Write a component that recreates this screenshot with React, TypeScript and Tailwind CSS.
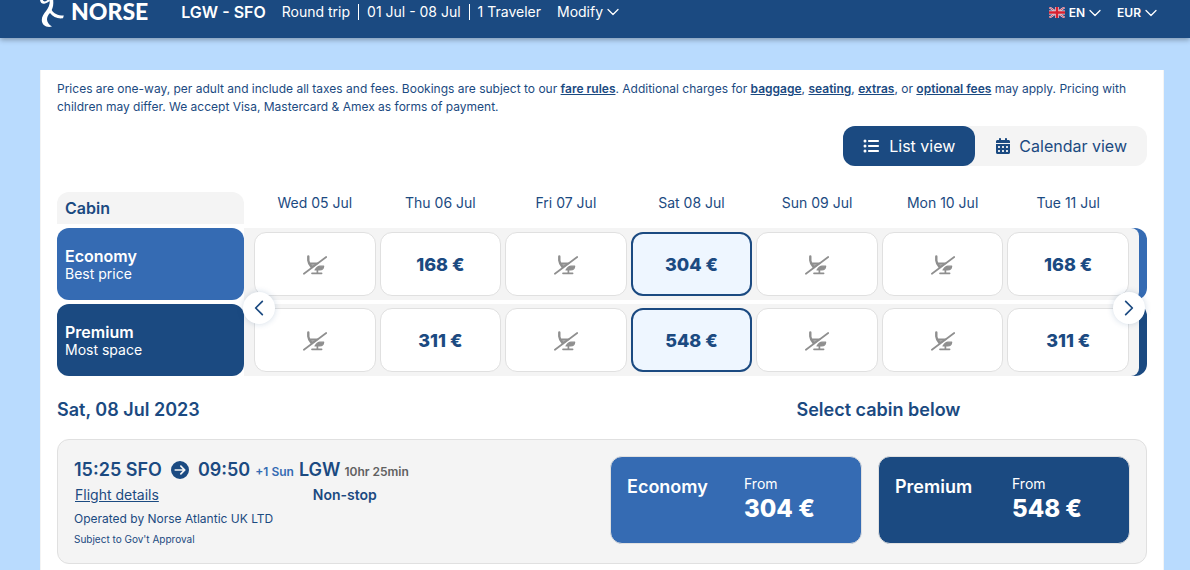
import { FaCalendarDays, FaCircleArrowRight, FaListUl } from "react-icons/fa6";
import { clsx } from "clsx";

type Day = { date: string; economy?: number; premium?: number; selected?: boolean };

const days: Day[] = [
  { date: "Wed 05 Jul" },
  { date: "Thu 06 Jul", economy: 168, premium: 311 },
  { date: "Fri 07 Jul" },
  { date: "Sat 08 Jul", economy: 304, premium: 548, selected: true },
  { date: "Sun 09 Jul" },
  { date: "Mon 10 Jul" },
  { date: "Tue 11 Jul", economy: 168, premium: 311 },
];

const cabins = [
  { key: "economy", name: "Economy", note: "Best price", color: "bg-[#356bb3]", price: 304 },
  { key: "premium", name: "Premium", note: "Most space", color: "bg-[#1b4a81]", price: 548 },
] as const;

const Chevron = ({ className }: { className?: string }) => (
  <svg viewBox="0 0 12 12" className={className} fill="none" stroke="currentColor" strokeWidth="1.3" strokeLinecap="round" strokeLinejoin="round" aria-hidden="true">
    <path d="M1 3.5 6 8.5 11 3.5" />
  </svg>
);

const Logo = () => (
  <a href="#" aria-label="Norse" className="flex items-start gap-[3px] text-white">
    <svg viewBox="0 0 28 28" className="h-7 w-7" fill="currentColor" aria-hidden="true">
      <path d="M9.800 0H13.200C13.600 4.500 13 7.500 11.700 10C13.500 13.500 17.500 15.500 23.800 15.500L23 18.300C17.500 19 12.800 17 10 13C6 17 5.500 22.500 12 26.600C6 28 1.800 24.800 1.800 20C1.800 13 10.500 9.500 9.800 0Z" />
      <path d="M0 0C0.500 3.500 3 4.300 5 3.600C7 3 8 1.800 9.800 1.200V0H7.500C6 1.500 4 2.300 2.800 0Z" />
    </svg>
    <span className="font-['Lato'] text-[23px] leading-[22px] font-black">NORSE</span>
  </a>
);

const Flag = () => (
  <svg viewBox="0 0 16 11" className="h-[11px] w-4" aria-hidden="true">
    <rect width="16" height="11" fill="#2f4379" />
    <path d="M0 0 16 11M16 0 0 11" stroke="#e8e3ea" strokeWidth="2" />
    <path d="M0 0 16 11M16 0 0 11" stroke="#c8203a" strokeWidth="0.8" />
    <path d="M8 0V11M0 5.500H16" stroke="#e8e3ea" strokeWidth="3.800" />
    <path d="M8 0V11M0 5.500H16" stroke="#d8202f" strokeWidth="2.600" />
  </svg>
);

const NoSeat = () => (
  <svg viewBox="0 0 24 20" className="mx-auto h-5 w-6" fill="none" stroke="#8f8f8f" strokeLinecap="round" strokeLinejoin="round" role="img" aria-label="Not available">
    <path d="M5.300 1.500V5.500Q5.500 8.500 8.700 12.300" strokeWidth="2.400" />
    <path d="M6.800 8.200H15L9 12.200Z" fill="#a8a8a8" strokeWidth="1.400" />
    <path d="M12 15 Q14.500 11.200 17 11.200H20.700 Q20.300 15 16.800 15Z" fill="#8f8f8f" strokeWidth="1.200" />
    <path d="M14.400 15V18M9 18.300H18.600" strokeWidth="1.700" />
    <path d="M5 17.300 20 6" stroke="#fff" strokeWidth="1" strokeLinecap="butt" />
    <path d="M0.900 18.800 23.200 2" strokeWidth="1.700" />
  </svg>
);

const Header = () => (
  <header className="relative flex h-[38px] items-start bg-[#1b4a81] pr-[33px] pl-10 text-white shadow-[0_2px_5px_rgba(0,0,0,0.3)]">
    <Logo />
    <div className="ml-[33px] flex h-6 items-center text-sm">
      <h1 className="mr-4 text-base leading-[22px] font-semibold">LGW - SFO</h1>
      <span className="pr-2">Round trip</span>
      <span className="border-l border-white px-2 leading-4">01 Jul - 08 Jul</span>
      <span className="border-l border-white px-2 leading-4">1 Traveler</span>
      <button type="button" className="ml-2 flex items-center gap-1">
        Modify <Chevron className="size-3" />
      </button>
    </div>
    <div className="ml-auto flex h-6 items-center gap-4 pt-px text-xs font-semibold">
      <button type="button" className="flex items-center gap-1">
        <Flag /> EN <Chevron className="size-3" />
      </button>
      <button type="button" className="flex items-center gap-1">
        EUR <Chevron className="size-3" />
      </button>
    </div>
  </header>
);

const NoticeLink = ({ children }: { children: string }) => (
  <a href="#" className="font-semibold underline">{children}</a>
);

const Fares = () => (
  <div className="relative mt-[26px]">
    <table className="w-full table-fixed border-separate border-spacing-0 text-center">
      <colgroup>
        <col className="w-[187px]" />
        <col className="w-2" />
        {days.map((day) => <col key={day.date} />)}
        <col className="w-4" />
      </colgroup>
      <thead>
        <tr>
          <th scope="col" className="h-8 rounded-t-xl bg-[#f4f4f4] px-2 text-left text-base font-semibold">Cabin</th>
          <td />
          {days.map((day) => (
            <th key={day.date} scope="col" className="pb-2.5 text-sm font-normal whitespace-nowrap">{day.date}</th>
          ))}
          <td />
        </tr>
      </thead>
      {cabins.map((cabin) => (
        <tbody key={cabin.key}>
          <tr><td className="h-1" /></tr>
          <tr className="h-[72px]">
            <th scope="row" className={clsx("rounded-xl px-2 pt-0.5 text-left text-white", cabin.color)}>
              <span className="block text-base leading-[18px] font-semibold">{cabin.name}</span>
              <span className="block text-sm leading-[18px] font-normal">{cabin.note}</span>
            </th>
            <td className="bg-[#f4f4f4]" />
            {days.map((day) => (
              <td key={day.date} className="bg-[#f4f4f4] px-0.5">
                <button
                  type="button"
                  className={clsx(
                    "block h-16 w-full rounded-xl pt-0.5 text-lg font-extrabold",
                    day.selected ? "border-2 border-[#1b4a81] bg-[#eef6ff]" : "border border-[#e0e0e0] bg-white",
                  )}
                >
                  {day[cabin.key] ? `${day[cabin.key]} €` : <NoSeat />}
                </button>
              </td>
            ))}
            <td className={clsx("rounded-r-xl", cabin.color)}>
              <div className="mr-2 h-[72px] rounded-r-xl bg-[#f4f4f4]" />
            </td>
          </tr>
        </tbody>
      ))}
    </table>
    <button type="button" aria-label="Earlier dates" className="absolute top-[100px] left-[186px] flex size-8 items-center justify-center rounded-full bg-white shadow-[0_0_6px_rgba(27,74,129,0.2)]">
      <Chevron className="size-4 rotate-90" />
    </button>
    <button type="button" aria-label="Later dates" className="absolute top-[100px] right-0.5 flex size-8 items-center justify-center rounded-full bg-white shadow-[0_0_6px_rgba(27,74,129,0.2)]">
      <Chevron className="size-4 -rotate-90" />
    </button>
  </div>
);

const Flight = () => (
  <article className="mt-[15px] flex justify-between rounded-xl border border-[#e0e0e0] bg-[#f4f4f4] p-4">
    <div>
      <div className="flex items-baseline text-lg leading-[27px] font-semibold">
        <span>15:25 SFO</span>
        <FaCircleArrowRight className="mx-[9px] size-[18px] self-center" />
        <span>09:50</span>
        <span className="mx-[5px] text-xs text-[#356bb3]">+1 Sun</span>
        <span>LGW</span>
        <span className="ml-1 text-xs text-[#616161]">10hr 25min</span>
      </div>
      <div className="flex justify-between pr-8 pl-px text-sm leading-6">
        <a href="#" className="underline">Flight details</a>
        <span className="font-semibold">Non-stop</span>
      </div>
      <p className="text-xs leading-6">Operated by Norse Atlantic UK LTD</p>
      <p className="text-[10px] leading-4">Subject to Gov't Approval</p>
    </div>
    <div className="grid w-[520px] grid-cols-2 items-start gap-4">
      {cabins.map((cabin) => (
        <button
          key={cabin.key}
          type="button"
          className={clsx("grid h-[88px] grid-cols-2 items-start rounded-xl border border-[#e0e0e0] px-4 pt-[17px] text-left text-white", cabin.color)}
        >
          <span className="text-lg leading-[26px] font-semibold">{cabin.name}</span>
          <span className="pl-2">
            <span className="block text-sm">From</span>
            <span className="block text-2xl leading-[30px] font-extrabold">{cabin.price} €</span>
          </span>
        </button>
      ))}
    </div>
  </article>
);

export default function App() {
  return (
    <div className="min-h-screen bg-[#b9dbfe] font-['Inter',sans-serif] text-[#1b4a81]">
      <Header />
      <main className="mt-8 mr-[26px] ml-10 border-x border-[#f4f4f4] bg-white px-4 pt-2.5 pb-6">
        <p className="text-xs leading-[18px]">
          Prices are one-way, per adult and include all taxes and fees. Bookings are subject to our <NoticeLink>fare rules</NoticeLink>. Additional charges for <NoticeLink>baggage</NoticeLink>, <NoticeLink>seating</NoticeLink>, <NoticeLink>extras</NoticeLink>, or <NoticeLink>optional fees</NoticeLink> may apply. Pricing with children may differ. We accept Visa, Mastercard & Amex as forms of payment.
        </p>
        <div className="mt-2.5 ml-auto flex w-fit rounded-xl bg-[#f4f4f4]">
          <button type="button" className="flex h-10 items-center gap-2.5 rounded-xl bg-[#1b4a81] px-5 text-white">
            <FaListUl /> List view
          </button>
          <button type="button" className="flex h-10 items-center gap-2 px-5">
            <FaCalendarDays /> Calendar view
          </button>
        </div>
        <Fares />
        <div className="mt-5 flex justify-between text-lg font-semibold">
          <h2>Sat, 08 Jul 2023</h2>
          <h2 className="w-[537px] text-center">Select cabin below</h2>
        </div>
        <Flight />
      </main>
    </div>
  );
}
